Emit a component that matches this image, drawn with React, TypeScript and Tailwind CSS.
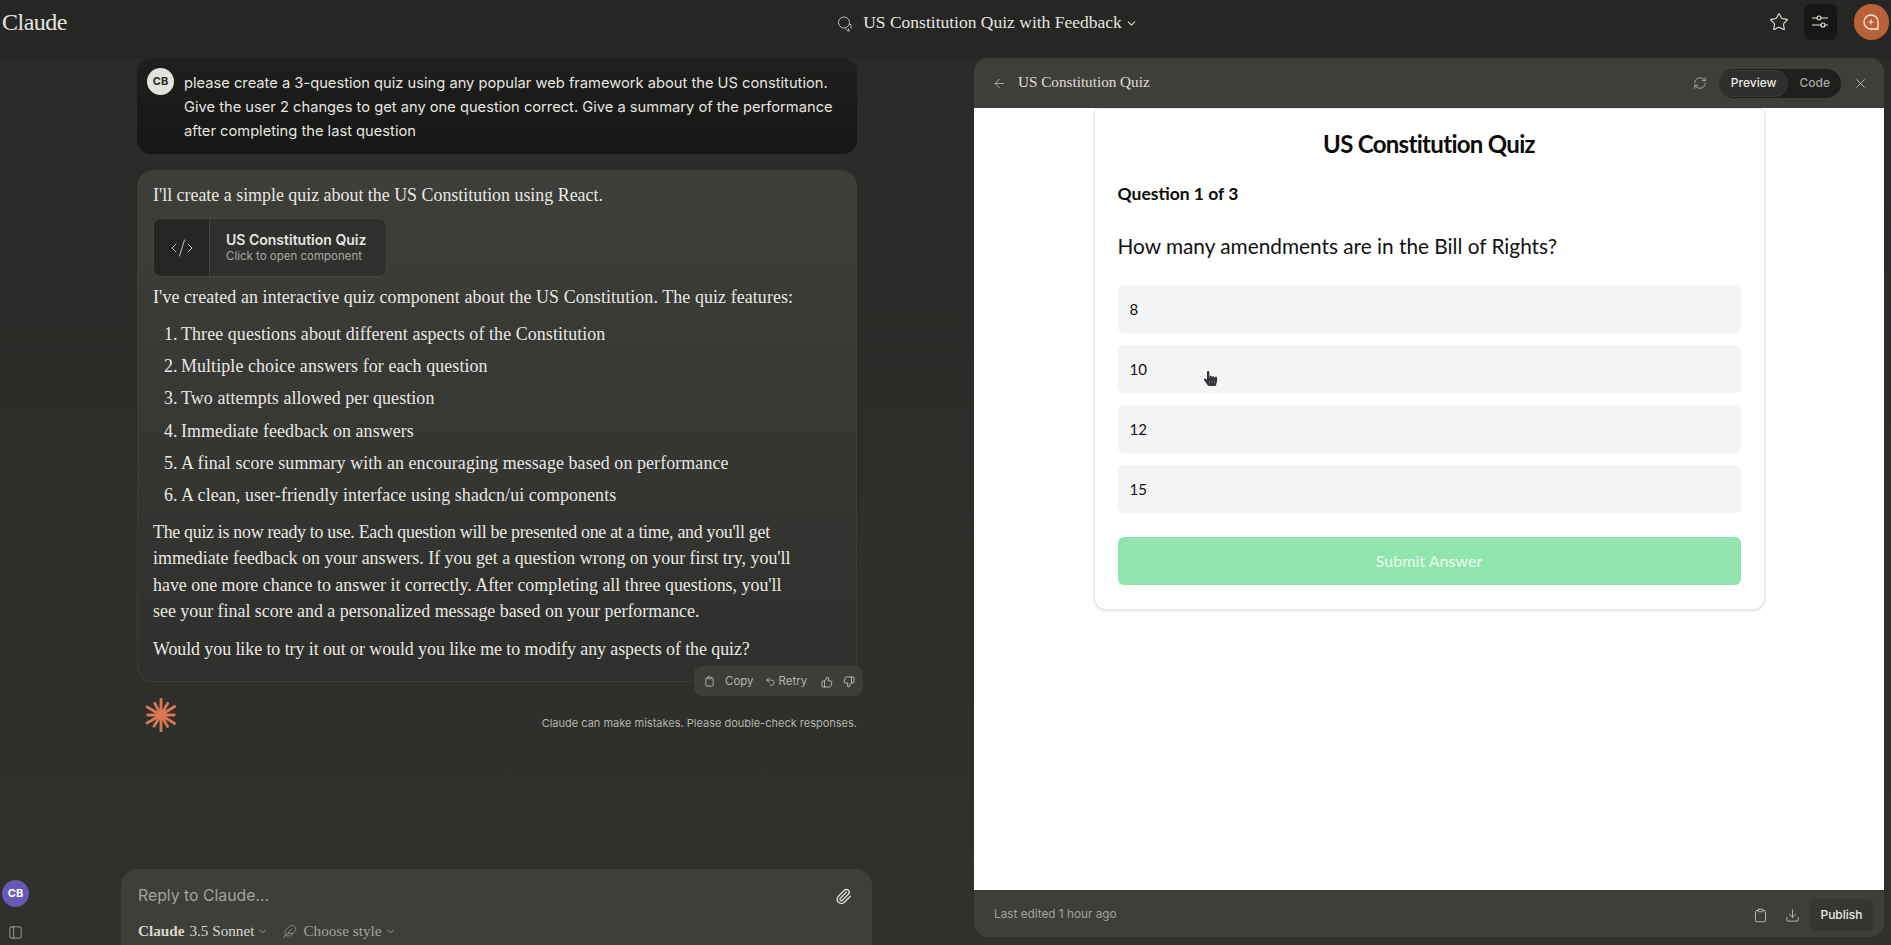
import { ArrowLeft, ChevronDown, Clipboard, CodeXml, Download, Feather, PanelLeft, Paperclip, RefreshCw, Star, ThumbsDown, ThumbsUp, Undo2, X } from "lucide-react"
import { FaHandPointer } from "react-icons/fa"

const serif = "font-['Liberation_Serif',serif]"
const sans = "font-['Inter',sans-serif]"
const quizFont = "font-['Lato',sans-serif]"

const features = [
    "Three questions about different aspects of the Constitution",
    "Multiple choice answers for each question",
    "Two attempts allowed per question",
    "Immediate feedback on answers",
    "A final score summary with an encouraging message based on performance",
    "A clean, user-friendly interface using shadcn/ui components",
]

const options = ["8", "10", "12", "15"]

function Spark() {
    const rays = [0, 30, 58, 90, 122, 150, 180, 212, 240, 270, 300, 332]
    return (
        <svg width="34" height="34" viewBox="-18 -18 36 36" className="text-[#d97757]">
            {rays.map((deg, i) => (
                <line key={deg} x1="0" y1="0" x2="0" y2={i % 2 ? -14 : -17} stroke="currentColor" strokeWidth="3" strokeLinecap="round" transform={`rotate(${deg})`} />
            ))}
        </svg>
    )
}

function TopBar() {
    return (
        <header className="flex h-[58px] shrink-0 items-center justify-between bg-[#262624] pb-[14px] pl-[2px] pr-[2px]">
            <div className={`${serif} w-[300px] text-[24px] tracking-[-0.5px] text-[#e6e5e0]`}>Claude</div>
            <div className="flex items-center gap-[10px] pl-[84px]">
                <svg width="16" height="17" viewBox="0 0 16 17" fill="none" stroke="#bdbcb6" strokeWidth="1" className="mt-[3px]">
                    <circle cx="7" cy="7.5" r="5.5" />
                    <path d="M9 13.5c0 1.5 1 2.5 3.5 2.5-.8-.6-1-1.500-1-2.500M12 9.500h2v4" />
                </svg>
                <span className={`${serif} text-[17.500px] text-[#e6e5e0]`}>US Constitution Quiz with Feedback</span>
                <ChevronDown size={13} className="-ml-[7px] mt-[2px] text-[#d8d7d1]" />
            </div>
            <div className="flex w-[300px] items-center justify-end">
                <Star size={20} strokeWidth={1.3} className="mr-[15px] text-[#e6e5e0]" />
                <div className="mr-[17px] flex h-[36px] w-[33px] items-center justify-center rounded-[6px] bg-[#171715]">
                    <svg width="18" height="16" viewBox="0 0 18 16" fill="none" stroke="#e6e5e0" strokeWidth="1.200">
                        <path d="M1 4h5M10 4h7M1 11h9M14 11h3" />
                        <circle cx="8" cy="4" r="2" />
                        <circle cx="12" cy="11" r="2" />
                    </svg>
                </div>
                <div className="flex h-[36px] w-[35px] items-center justify-center rounded-full bg-[#b9623a]">
                    <svg width="20" height="20" viewBox="0 0 20 20" fill="none" stroke="#f6e8e0" strokeWidth="1.300">
                        <path d="M17 17h-7a7 7 0 1 1 7-7z" />
                        <path d="M10 7.500v5M7.500 10h5" strokeWidth="1.100" />
                    </svg>
                </div>
            </div>
        </header>
    )
}

function UserMessage() {
    return (
        <div className="flex gap-[10px] rounded-[14px] bg-gradient-to-b from-[#1f1f1d] to-[#161615] pb-[11px] pl-[10px] pr-[10px] pt-[13px]">
            <div className={`${sans} -mt-[3px] flex h-[27px] w-[27px] shrink-0 items-center justify-center rounded-full bg-[#e3e2de] text-[11px] font-bold text-[#2a2a28]`}>CB</div>
            <p className={`${sans} text-[14.700px] leading-[24px] text-[#e6e5e0]`}>
                please create a 3-question quiz using any popular web framework about the US constitution. Give the user 2 changes to get any one question correct. Give a summary of the performance after completing the last question
            </p>
        </div>
    )
}

function ArtifactCard() {
    return (
        <div className="mt-[11px] flex h-[59px] w-[234px] overflow-hidden rounded-[8px] border border-[#454542] bg-[#30302e]">
            <div className="flex w-[56px] shrink-0 items-center justify-center border-r border-[#454542] bg-[#252523]">
                <CodeXml size={24} strokeWidth={1} className="text-[#c2c1bb]" />
            </div>
            <div className="flex flex-col justify-center pl-[16px]">
                <div className={`${sans} text-[14px] font-semibold leading-[18px] text-[#e6e5e0]`}>US Constitution Quiz</div>
                <div className={`${sans} text-[11.500px] leading-[15px] text-[#a9a8a2]`}>Click to open component</div>
            </div>
        </div>
    )
}

function AssistantMessage() {
    return (
        <div className={`${serif} relative mt-[16px] h-[512px] rounded-[16px] border border-[#3c3c39] bg-gradient-to-b from-[#3e3e3b] to-[#2f2f2d] pl-[15px] pr-[20px] pt-[12px] text-[17.900px] text-[#e9e8e3]`}>
            <p className="leading-[24px]">I'll create a simple quiz about the US Constitution using React.</p>
            <ArtifactCard />
            <p className="mt-[7px] leading-[26px] tracking-[0.1px]">I've created an interactive quiz component about the US Constitution. The quiz features:</p>
            <ol className="mt-[8px] tracking-[0.1px]">
                {features.map((f, i) => (
                    <li key={f} className="flex h-[32.300px] items-center pl-[11px]">
                        <span className="w-[17px]">{i + 1}.</span>
                        {f}
                    </li>
                ))}
            </ol>
            <p className="mt-[7px] leading-[26.500px]">
                <span className="tracking-[-0.3px]">The quiz is now ready to use. Each question will be presented one at a time, and you'll get</span>
                <br />
                immediate feedback on your answers. If you get a question wrong on your first try, you'll
                <br />
                have one more chance to answer it correctly. After completing all three questions, you'll
                <br />
                see your final score and a personalized message based on your performance.
            </p>
            <p className="mt-[11px] leading-[26px] tracking-[-0.06px]">Would you like to try it out or would you like me to modify any aspects of the quiz?</p>
            <div className={`${sans} absolute -bottom-[15px] -right-[7px] flex h-[30px] w-[169px] items-center rounded-[8px] bg-[#3d3d3a] pl-[10px] pt-[1px] text-[11.500px] text-[#b5b4ae]`}>
                <Clipboard size={11} />
                <span className="ml-[10px]">Copy</span>
                <Undo2 size={11} className="ml-[11px]" />
                <span className="ml-[3px]">Retry</span>
                <ThumbsUp size={12} className="ml-[14px]" />
                <ThumbsDown size={12} className="ml-[10px]" />
            </div>
        </div>
    )
}

function Composer() {
    return (
        <div className="mt-auto h-[76px] w-[751px] shrink-0 rounded-t-[16px] bg-[#3e3e3a] pl-[17px] pr-[20px] pt-[15px]">
            <div className="flex items-center justify-between">
                <span className={`${sans} text-[15.800px] leading-[24px] text-[#a3a29c]`}>Reply to Claude...</span>
                <Paperclip size={17} className="text-[#d8d7d1]" />
            </div>
            <div className={`${serif} mt-[13px] flex items-center text-[#d8d7d1]`}>
                <span className="text-[15.200px] font-bold leading-[20px]">Claude</span>
                <span className="ml-[5px] text-[15.200px] leading-[20px]">3.5 Sonnet</span>
                <ChevronDown size={11} className="ml-[3px] text-[#a3a29c]" />
                <Feather size={15} strokeWidth={1.1} className="ml-[14px] text-[#a3a29c]" />
                <span className="ml-[6px] text-[15.200px] leading-[20px] text-[#a3a29c]">Choose style</span>
                <ChevronDown size={11} className="ml-[4px] text-[#a3a29c]" />
            </div>
        </div>
    )
}

function ChatColumn() {
    return (
        <div className="flex w-[974px] shrink-0">
            <div className="flex w-[31px] shrink-0 flex-col items-center justify-end pb-[5px]">
                <div className={`${sans} flex h-[27px] w-[27px] items-center justify-center rounded-full bg-[#6a58b6] text-[11px] font-bold text-white`}>CB</div>
                <PanelLeft size={15} strokeWidth={1.2} className="mt-[18px] text-[#bdbcb6]" />
            </div>
            <div className="flex min-w-0 flex-1 flex-col pl-[90px]">
                <div className="ml-[16px] w-[720px]">
                    <UserMessage />
                    <AssistantMessage />
                    <div className="mt-[16px] flex items-start justify-between pl-[7px] pr-0">
                        <Spark />
                        <span className={`${sans} mt-[17px] text-[11px] text-[#b5b4ae]`}>Claude can make mistakes. Please double-check responses.</span>
                    </div>
                </div>
                <Composer />
            </div>
        </div>
    )
}

function Quiz() {
    return (
        <div className={`${quizFont} mx-auto flex h-[502px] w-[671px] flex-col rounded-b-[12px] rounded-t-[6px] border border-[#e6e7ea] bg-white px-[23px] shadow-sm`}>
            <h1 className="mt-[19px] text-center text-[24px] font-bold leading-[32px] tracking-[-0.7px] text-[#0b0b0b]">US Constitution Quiz</h1>
            <div className="mt-[22px] text-[17.500px] font-bold leading-[24px] text-[#0b0b0b]">Question 1 of 3</div>
            <div className="mt-[26px] text-[20.800px] leading-[28px] text-[#111]">How many amendments are in the Bill of Rights?</div>
            <div className="mt-[25px] flex flex-col gap-[12px]">
                {options.map(o => (
                    <div key={o} className="flex h-[48px] items-center rounded-[6px] bg-[#f3f4f6] px-[12px] text-[15px] text-[#111]">{o}</div>
                ))}
            </div>
            <div className="mt-[24px] flex h-[48px] items-center justify-center rounded-[6px] bg-[#91e4ae] text-[16px] font-medium text-[#e6f9ec]">Submit Answer</div>
        </div>
    )
}

function ArtifactPanel() {
    return (
        <div className="relative ml-0 mr-[7px] flex h-[879px] flex-1 flex-col overflow-hidden rounded-[14px] bg-[#3e3e3a]">
            <div className="flex h-[50px] shrink-0 items-center pl-[18px] pr-[16px]">
                <ArrowLeft size={15} strokeWidth={1.3} className="text-[#bdbcb6]" />
                <span className={`${serif} mb-[2px] ml-[11px] text-[15.200px] text-[#e0dfd9]`}>US Constitution Quiz</span>
                <RefreshCw size={14} strokeWidth={1.2} className="ml-auto mr-[12px] text-[#cfcec8]" />
                <div className={`${sans} flex h-[29px] items-center rounded-full bg-[#1f1f1d] text-[12px] font-medium`}>
                    <span className="flex h-[27px] items-center rounded-full border border-[#3c3c39] bg-[#2e2e2c] px-[11px] text-[#ecebe6]">Preview</span>
                    <span className="px-[11px] text-[#a9a8a2]">Code</span>
                </div>
                <X size={15} strokeWidth={1.2} className="ml-[12px] text-[#d8d7d1]" />
            </div>
            <div className="relative flex-1 bg-white">
                <Quiz />
                <FaHandPointer size={15} className="absolute left-[229px] top-[263px] text-[#33343a]" />
            </div>
            <div className="flex h-[47px] shrink-0 items-center pl-[20px] pr-[10px] pt-[3px]">
                <span className={`${sans} text-[11.800px] text-[#a3a29c]`}>Last edited 1 hour ago</span>
                <Clipboard size={15} strokeWidth={1.3} className="ml-auto text-[#cfcec8]" />
                <Download size={15} strokeWidth={1.3} className="ml-[17px] text-[#cfcec8]" />
                <span className={`${sans} ml-[9px] flex h-[32px] w-[65px] items-center justify-center rounded-[6px] bg-[#363633] text-[12px] font-medium text-[#ecebe6]`}>Publish</span>
            </div>
        </div>
    )
}

export default function App() {
    return (
        <div className="flex h-[945px] w-[1891px] flex-col overflow-hidden bg-[#2f2f2c]">
            <TopBar />
            <div className="flex min-h-0 flex-1 bg-gradient-to-b from-[#2a2a28] to-[#30302d]">
                <ChatColumn />
                <ArtifactPanel />
            </div>
        </div>
    )
}
